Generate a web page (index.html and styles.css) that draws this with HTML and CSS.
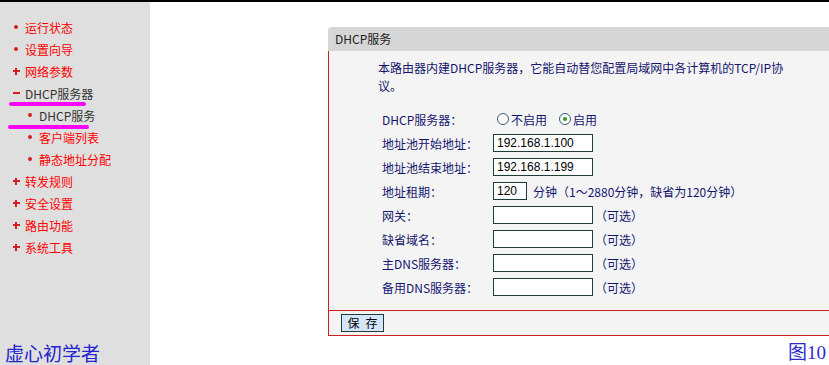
FILE: index.html
```html
<!DOCTYPE html>
<html lang="zh-CN">
<head>
  <meta charset="UTF-8">
  <title>DHCP服务</title>
  <meta name="viewport" content="width=device-width, initial-scale=1.0">
  <link rel="stylesheet" href="styles.css">
</head>
<body>
  <div class="topbar"></div>
  <div class="layout">
    <aside class="sidebar">
      <ul class="menu">
        <li class="item"><span class="icon dot"></span>运行状态</li>
        <li class="item"><span class="icon dot"></span>设置向导</li>
        <li class="item"><span class="icon plus"></span>网络参数</li>
        <li class="item open"><span class="icon minus"></span>DHCP服务器</li>
        <li class="item sub open"><span class="icon dot"></span>DHCP服务</li>
        <li class="item sub"><span class="icon dot"></span>客户端列表</li>
        <li class="item sub"><span class="icon dot"></span>静态地址分配</li>
        <li class="item"><span class="icon plus"></span>转发规则</li>
        <li class="item"><span class="icon plus"></span>安全设置</li>
        <li class="item"><span class="icon plus"></span>路由功能</li>
        <li class="item"><span class="icon plus"></span>系统工具</li>
      </ul>
      <!-- hand-drawn highlight marks -->
      <div class="mark mark-one"></div>
      <div class="mark mark-two"></div>
      <div class="signature">虚心初学者</div>
    </aside>

    <main class="content">
      <section class="panel">
        <div class="panel-title">DHCP服务</div>
        <div class="panel-body">
          <p class="intro">本路由器内建DHCP服务器，它能自动替您配置局域网中各计算机的TCP/IP协<br>议。</p>
          <div class="form">
            <div class="row">
              <label class="label">DHCP服务器：</label>
              <span class="radio"></span><span class="radio-text">不启用</span>
              <span class="radio checked"></span><span class="radio-text">启用</span>
            </div>
            <div class="row">
              <label class="label">地址池开始地址：</label>
              <input class="field" type="text" value="192.168.1.100">
            </div>
            <div class="row">
              <label class="label">地址池结束地址：</label>
              <input class="field" type="text" value="192.168.1.199">
            </div>
            <div class="row">
              <label class="label">地址租期：</label>
              <input class="field short" type="text" value="120">
              <span class="hint">分钟（1～2880分钟，缺省为120分钟）</span>
            </div>
            <div class="row">
              <label class="label">网关：</label>
              <input class="field" type="text">
              <span class="optional">（可选）</span>
            </div>
            <div class="row">
              <label class="label">缺省域名：</label>
              <input class="field" type="text">
              <span class="optional">（可选）</span>
            </div>
            <div class="row">
              <label class="label">主DNS服务器：</label>
              <input class="field" type="text">
              <span class="optional">（可选）</span>
            </div>
            <div class="row">
              <label class="label">备用DNS服务器：</label>
              <input class="field" type="text">
              <span class="optional">（可选）</span>
            </div>
          </div>
          <div class="panel-footer">
            <button class="save-btn" type="button">保&ensp;存</button>
          </div>
        </div>
      </section>
      <div class="caption">图10</div>
    </main>
  </div>
</body>
</html>
```

FILE: styles.css
```css
body {
  margin: 0;
  height: 365px;
  overflow: hidden;
  font-family: "Noto Sans CJK SC", sans-serif;
  font-size: 12px;
  background: #fff;
}

.topbar {
  height: 2px;
  background: #000;
}

.layout {
  display: flex;
  height: 363px;
}

/* Sidebar */
.sidebar {
  position: relative;
  width: 150px;
  flex: none;
  background: #dfdfdf;
  display: flex;
  flex-direction: column;
}

.menu {
  list-style: none;
  margin: 0;
  padding: 14px 0 0;
}

.item {
  display: flex;
  align-items: center;
  height: 22px;
  padding-left: 10px;
  color: #ff0000;
}

.item.sub {
  padding-left: 24px;
}

.item.open {
  color: #333;
}

.icon {
  position: relative;
  width: 12px;
  height: 12px;
  margin-right: 3px;
  flex: none;
}

.dot::before {
  content: "";
  position: absolute;
  left: 4px;
  top: 4px;
  width: 4px;
  height: 4px;
  border-radius: 50%;
  background: #d42020;
}

.plus::before,
.plus::after,
.minus::before {
  content: "";
  position: absolute;
  background: #d42020;
}

.plus::before,
.minus::before {
  left: 3px;
  top: 5px;
  width: 7px;
  height: 2px;
}

.plus::after {
  left: 5px;
  top: 3px;
  width: 2px;
  height: 7px;
}

.mark {
  position: absolute;
  height: 4px;
  border-radius: 2px;
  background: #ff00ff;
}

.mark-one {
  left: 9px;
  top: 100px;
  width: 77px;
}

.mark-two {
  left: 8px;
  top: 123px;
  width: 81px;
}

.signature {
  margin-top: auto;
  padding: 0 0 1px 5px;
  font-size: 19px;
  line-height: 22px;
  color: #2323d0;
}

/* Content */
.content {
  flex: 1;
  min-width: 0;
  overflow: hidden;
  display: flex;
  flex-direction: column;
}

.panel {
  margin: 25px 0 0 178px;
  width: 540px;
}

.panel-title {
  height: 24px;
  line-height: 24px;
  padding-left: 7px;
  background: #d6d6d6;
  border-top-left-radius: 4px;
  color: #222;
}

.panel-body {
  background: #f4f4f4;
  border-left: 1px solid #cc2222;
  border-bottom: 1px solid #cc2222;
}

.intro {
  margin: 0;
  padding: 8px 0 0 49px;
  line-height: 18px;
  color: #14146e;
}

.form {
  margin-top: 12px;
  padding-bottom: 11px;
  color: #14146e;
}

.row {
  display: flex;
  align-items: center;
  height: 24px;
  padding-left: 53px;
}

.label {
  width: 111px;
  flex: none;
}

.radio {
  position: relative;
  width: 10px;
  height: 10px;
  margin-left: 4px;
  border: 1px solid #3c5a7c;
  border-radius: 50%;
  background: #fbfbfb;
  flex: none;
}

.radio + .radio-text + .radio {
  margin-left: 12px;
}

.radio.checked::after {
  content: "";
  position: absolute;
  left: 3px;
  top: 3px;
  width: 4px;
  height: 4px;
  border-radius: 50%;
  background: #2e9a2e;
}

.radio-text {
  margin-left: 2px;
}

.field {
  box-sizing: border-box;
  width: 100px;
  height: 18px;
  margin: 0;
  padding: 0 3px;
  border: 1px solid #1e3c3c;
  background: #fff;
  font-family: "Liberation Sans", Arial, sans-serif;
  font-size: 12px;
  color: #000;
}

.field.short {
  width: 34px;
}

.hint {
  margin-left: 6px;
}

.optional {
  margin-left: 2px;
}

.panel-footer {
  height: 25px;
  padding: 3px 0 0 12px;
  box-sizing: border-box;
  border-top: 1px solid #cc2222;
}

.save-btn {
  width: 43px;
  height: 18px;
  padding: 0;
  border: 1px solid #1e3c3c;
  background: #d6e6fa;
  font-family: "Noto Sans CJK SC", sans-serif;
  font-size: 12px;
  line-height: 14px;
  color: #000;
}

.caption {
  margin-top: auto;
  padding: 0 3px 1px 0;
  text-align: right;
  font-family: "Liberation Serif", "Noto Sans CJK SC", serif;
  font-size: 19px;
  line-height: 22px;
  color: #2a2ad0;
}
```
